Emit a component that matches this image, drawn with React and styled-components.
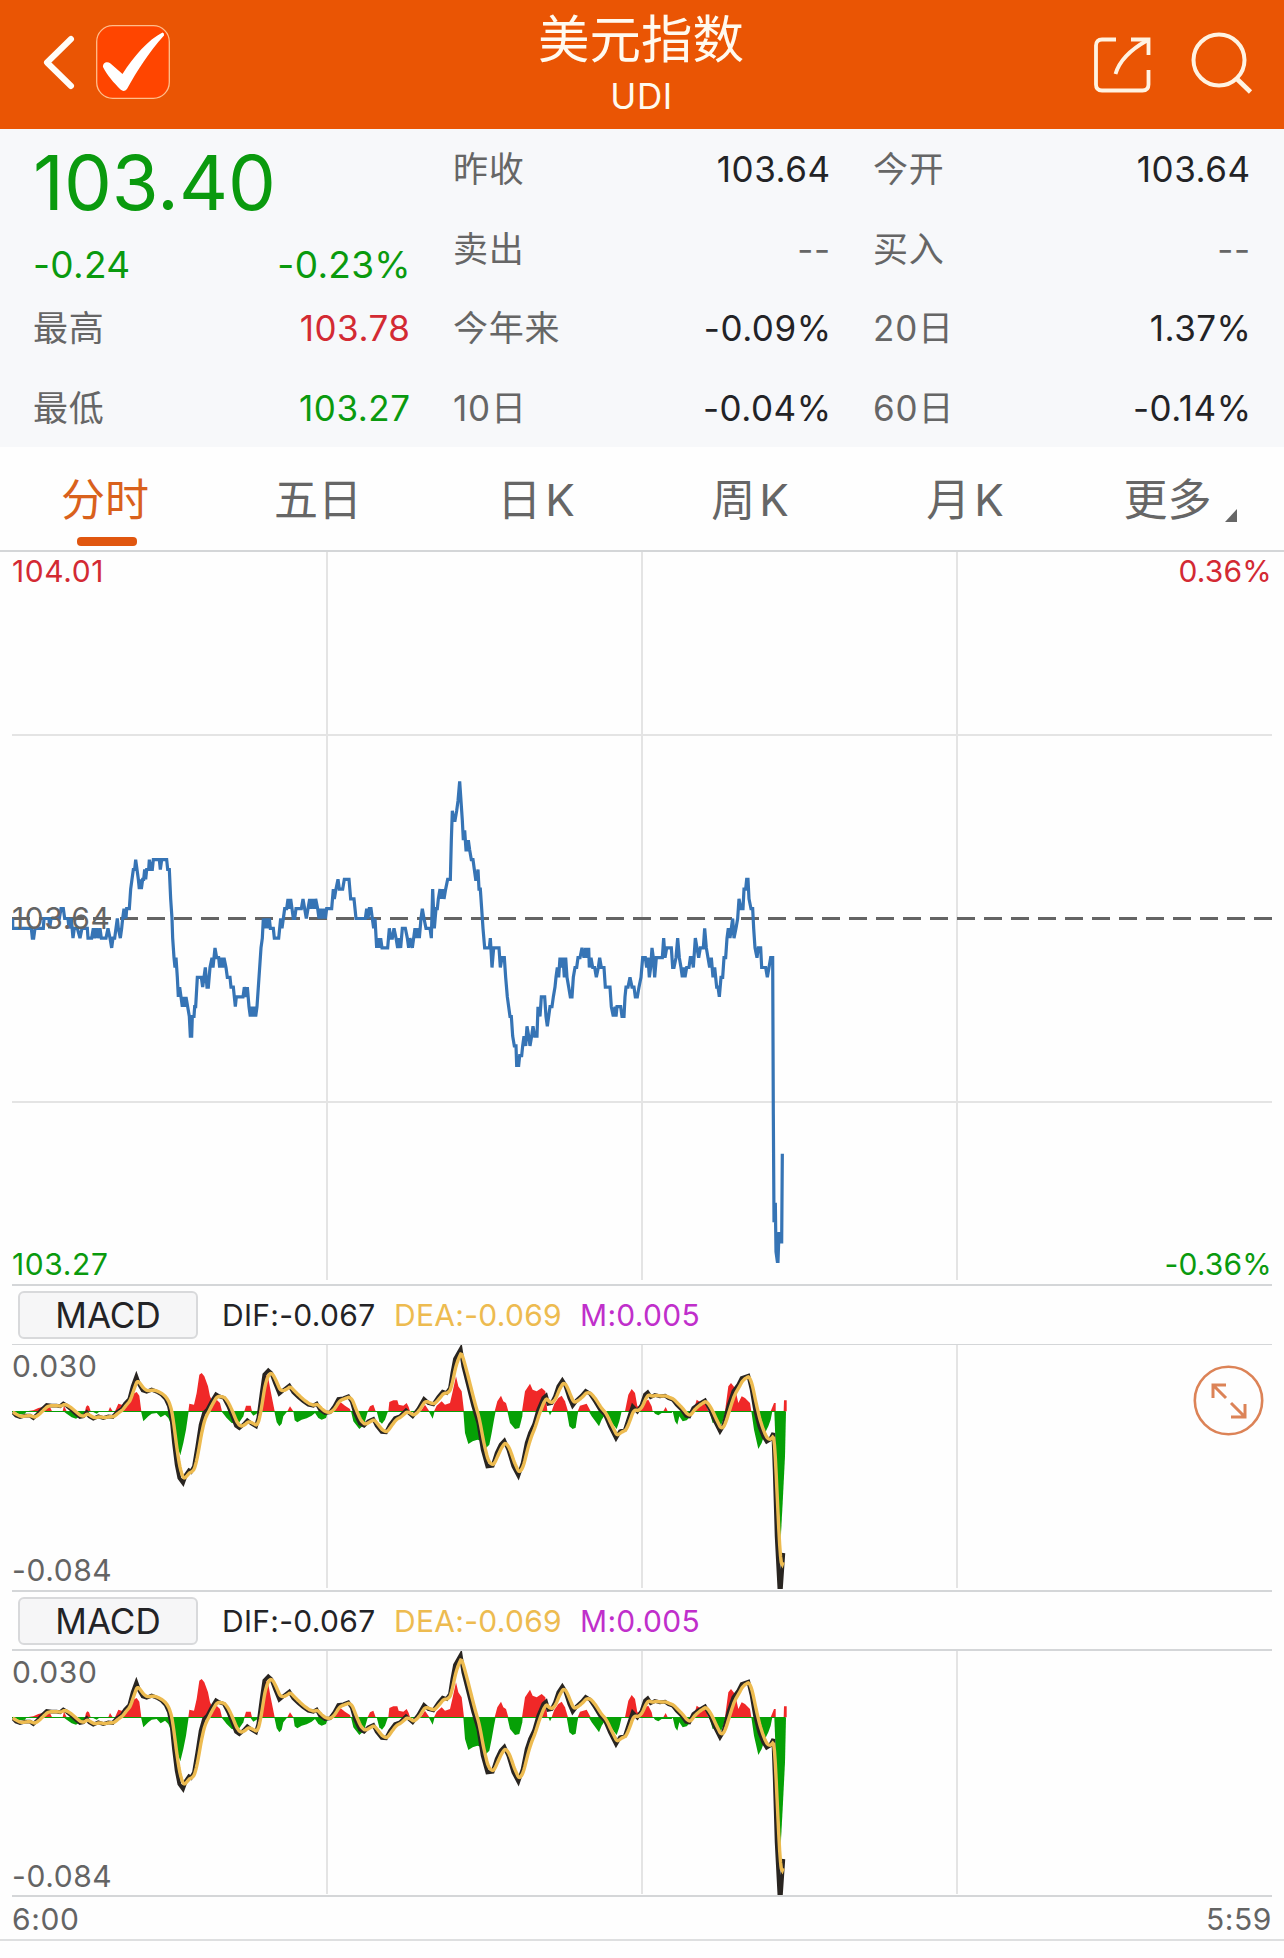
import React from "react";
import styled, { createGlobalStyle } from "styled-components";

const color = {
  brand: "#ea5504",
  up: "#d32a33",
  down: "#0a9a0e",
  text: "#232326",
  label: "#666666",
  axis: "#646464",
  grid: "#e4e4e4",
  rule: "#d4d6d8",
  price: "#3674b5",
  dea: "#edbb50",
  macd: "#c02fcb",
};

const GlobalStyle = createGlobalStyle`
  * { box-sizing: border-box; }
  body {
    margin: 0;
    background: #fefefe;
    font-family: Inter, "Noto Sans CJK SC", sans-serif;
    color: ${color.text};
  }
`;

const Page = styled.div`
  width: 1284px;
  height: 1958px;
  overflow: hidden;
  display: flex;
  flex-direction: column;
`;

/* ---------- header ---------- */

const Header = styled.header`
  height: 129px;
  flex: none;
  display: grid;
  grid-template-columns: 1fr auto 1fr;
  background: ${color.brand};
  color: #fffaf0;
`;

const HeaderSide = styled.div`
  display: flex;
  justify-content: ${(p) => (p.$end ? "flex-end" : "flex-start")};
  gap: ${(p) => p.$gap}px;
  padding: ${(p) => p.$pad};
`;

const Titles = styled.div`
  display: flex;
  flex-direction: column;
  align-items: center;
  padding-top: 10px;
`;

const Title = styled.h1`
  margin: 0;
  padding-right: 2px;
  font-size: 51.5px;
  line-height: 58px;
  font-weight: 400;
`;

const Symbol = styled.div`
  font-size: 35px;
  line-height: 40px;
  margin-top: 8px;
  padding-right: 1px;
  letter-spacing: 0.6px;
`;

/* ---------- quote ---------- */

const Quote = styled.section`
  height: 318px;
  flex: none;
  display: grid;
  grid-template-columns: repeat(3, 376px);
  column-gap: 44px;
  padding-left: 34px;
  background: #f7f8fa;
`;

const QuoteColumn = styled.div`
  display: flex;
  flex-direction: column;
`;

const LastPrice = styled.div`
  height: 94px;
  padding-top: 13px;
  line-height: 80px;
  font-size: 76px;
  text-indent: -1px;
  color: ${color.down};
`;

const Change = styled.div`
  height: 65px;
  padding-top: 19px;
  display: flex;
  justify-content: space-between;
  font-size: 37px;
  line-height: 46px;
  letter-spacing: 0.3px;
  margin: 0 -1px;
  color: ${color.down};
`;

const Stat = styled.div`
  height: 79.5px;
  padding-top: 1px;
  display: flex;
  align-items: center;
  justify-content: space-between;
  font-size: 35px;
  line-height: 40px;
`;

const StatLabel = styled.span`
  color: ${color.label};
  letter-spacing: 0.8px;
  margin-left: -1px;
`;

const StatValue = styled.span`
  color: ${(p) => p.$color || color.text};
  letter-spacing: 0.5px;
  margin-right: ${(p) => (p.$percent ? -1.5 : -0.5)}px;
`;

/* ---------- tabs ---------- */

const Tabs = styled.nav`
  height: 105px;
  flex: none;
  display: grid;
  grid-template-columns: 210px 216px 220px 208px 222px 208px;
  border-bottom: 2px solid ${color.rule};
`;

const Tab = styled.div`
  position: relative;
  display: flex;
  justify-content: center;
  gap: ${(p) => p.$gap || 0}px;
  padding-top: 27px;
  font-size: 44px;
  line-height: 52px;
  color: ${(p) => (p.$active ? "#d9611c" : color.label)};
  &::after {
    content: "";
    display: ${(p) => (p.$active ? "block" : "none")};
    position: absolute;
    left: 77px;
    top: 90px;
    width: 60px;
    height: 9px;
    border-radius: 4px;
    background: #e0560f;
  }
`;

const Corner = styled.svg`
  align-self: flex-end;
  margin-bottom: 28px;
`;

/* ---------- charts ---------- */

const ChartBox = styled.div`
  position: relative;
  flex: none;
  height: ${(p) => p.$height}px;
  margin: 0 12px;
  border-bottom: 2px solid ${color.rule};
`;

const Plot = styled.svg`
  display: block;
  width: 1260px;
  height: 100%;
  overflow: hidden;
`;

const AxisLabel = styled.span`
  position: absolute;
  ${(p) => (p.$right ? "right: 0;" : "left: 0;")}
  top: ${(p) => p.$top}px;
  font-size: 30px;
  line-height: 36px;
  letter-spacing: ${(p) => (p.$right ? 0.2 : 0.6)}px;
  color: ${(p) => p.$color || color.axis};
`;

const IndicatorBar = styled.div`
  height: 59px;
  flex: none;
  margin: 0 12px;
  padding-left: 6px;
  display: flex;
  align-items: center;
  border-bottom: ${(p) => (p.$thin ? 1 : 2)}px solid ${color.rule};
  font-size: 30px;
`;

const IndicatorButton = styled.button`
  width: 180px;
  height: 48px;
  margin: 0 24px 0 0;
  padding: 0;
  border: 2px solid #d8d9db;
  border-radius: 6px;
  background: #f6f6f7;
  color: ${color.text};
  font: 400 35px/44px Inter, sans-serif;
`;

const Reading = styled.span`
  color: ${(p) => p.$color};
  width: ${(p) => p.$width}px;
  white-space: nowrap;
  letter-spacing: 0.3px;
`;

const ExpandButton = styled.button`
  position: absolute;
  right: 8px;
  top: 20px;
  width: 71px;
  height: 71px;
  padding: 0;
  border: 0;
  background: none;
`;

const TimeAxis = styled.div`
  height: 44px;
  flex: none;
  display: flex;
  justify-content: space-between;
  align-items: center;
  padding: 1px 12px 0;
  border-bottom: 2px solid #dedfe0;
  font-size: 30px;
  letter-spacing: 0.6px;
  color: ${color.axis};
`;

/* ---------- data: x in thirds of a pixel, price in cents from the previous close ---------- */

const parse = (s) =>
  s.trim().split(/\s*,\s*/).map((p) => p.trim().split(/\s+/).map(Number));
const shift = (pts, dx) => pts.map(([x, y]) => [x + dx, y]);

const price = [
  ...parse(`38 0,38 -1,94 -1,97 -2,101 -2,105 -1,130 -1,132 0,147 0,149 -1,153 0,158 0,178 0,183 1,190 1,194 0,204 0,207 -1,214 0,219 -2,223 -1,232 -1,240 -2,246 -1,262 -1,264 -2,275 -2,280 -1,284 -2,290 -1,294 -2,300 -1,304 -2,318 -2,324 -1,330 -2,335 -3,339 -2,344 -2,348 -1,352 0,355 -1,361 -2,365 -1,368 0,372 1,378 0,380 1,388 1,392 3,396 4,400 5,404 5,407 6,411 5,415 4,418 3,421 4,424 3,428 4,431 4,434 5,437 4,440 5,446 5,448 6,453 5,457 5,460 6,478 6,481 5,485 6,500 6,503 5,508 5,512 2,516 0,518 -2,522 -4,525 -5,528 -4,532 -6,535 -8,539 -7,543 -8,547 -9,551 -8,555 -9,558 -8,563 -9,568 -10,571 -12,575 -12,577 -10,582 -10,584 -9,587 -9,592 -6,604 -6,608 -7,612 -6,616 -5,621 -7,625 -7,630 -5,636 -4,639 -5,642 -4,645 -3,650 -4,656 -4,659 -5,664 -4,668 -5,672 -4,678 -5,682 -6,690 -6,693 -7,700 -7,703 -8,706 -9,709 -8,729 -8,733 -7,738 -8,742 -7,747 -9,751 -10,755 -9,760 -10,764 -9,767 -10,771 -9,775 -7,779 -5,783 -3,787 -2,790 0,794 -1,800 0,804 -1,808 0,811 -1,820 -1,823 -2,836 -2,842 0,846 -1,850 0,854 1,860 1,864 2,868 1,872 2,876 1,880 0,884 0,888 1,904 1,909 2,914 1,919 0,924 1,929 2,933 1,938 2,943 1,947 2,953 1,957 0,962 1,967 0,972 1,976 0,980 1,995 1,1000 3,1003 2,1008 3,1014 4,1018 3,1028 3,1033 4,1047 4,1052 2,1062 2,1068 0,1096 0,1100 1,1104 0,1108 1,1113 1,1117 0,1121 -1,1125 0,1130 -3,1134 -2,1138 -3,1142 -2,1146 -3,1163 -3,1168 -1,1172 -2,1177 -2,1182 -1`),
  ...shift(
    parse(`48 -2,53 -3,57 -2,62 -3,67 -1,76 -1,82 -2,86 -3,90 -2,97 -3,101 -2,105 -1,110 -2,115 -1,118 -2,123 0,127 1,132 0,138 -1,150 -1,154 -2,158 3,163 -1,168 1,172 1,175 2,180 3,184 2,188 3,192 2,197 3,203 4,211 4,214 8,217 11,221 10,225 10,230 11,234 12,239 14,243 12,247 10,250 8,254 9,258 7,262 7,265 8,269 7,274 6,279 6,283 5,287 4,291 4,294 5,297 3,301 3,305 1,309 -1,314 -3,328 -3,331 -2,336 -5,341 -3,357 -3,361 -5,366 -4,373 -4,377 -6,382 -8,386 -9,390 -10,394 -10,398 -12,403 -13,408 -13,410 -15,416 -15,419 -14,425 -14,428 -13,432 -12,437 -13,441 -11,446 -12,450 -13,455 -12,459 -11,464 -12,471 -12,474 -9,480 -10,484 -8,489 -8,494 -8,498 -10,502 -11,506 -10,510 -9,516 -9,520 -8,525 -7,528 -6,532 -5,536 -6,540 -4,545 -5,549 -4,553 -6,557 -4,561 -6,566 -7,571 -8,576 -8,580 -6,585 -5,590 -5,594 -4,600 -4,606 -3,612 -4,617 -3,622 -4,626 -3,628 -5,633 -4,638 -5,644 -5,649 -6,655 -5,659 -4,664 -5,672 -5,676 -7,690 -7,694 -9,700 -10,705 -9,708 -10,711 -9,722 -9,726 -10,732 -10,735 -8,738 -7,744 -7,750 -6,756 -7,762 -7,766 -8,772 -8,777 -7,783 -6,788 -4,796 -4,800 -5,804 -4,808 -6,812 -5,816 -3,820 -4,824 -6,829 -4,847 -4,851 -2,855 -4,860 -3,874 -3,878 -5,882 -5,888 -4,893 -2,898 -4,903 -5,907 -6,911 -5,915 -6,920 -5,927 -5,931 -4,936 -4,940 -5,946 -2,951 -3,956 -4,961 -3,970 -3,974 -1,979 -3,984 -4,989 -5,994 -4,999 -6,1004 -5,1010 -7,1014 -7,1018 -8,1023 -6,1028 -6,1032 -4,1037 -4,1041 -2,1045 -1,1050 -2,1054 -1,1058 0,1062 -2,1068 -1,1073 0,1077 2,1083 1,1089 1,1092 3,1097 3,1100 4,1104 4,1107 2,1113 1,1118 1,1121 -1,1125 -3,1131 -4,1135 -3,1142 -3,1145 -5,1157 -5,1162 -6,1167 -5,1172 -4,1178 -4,1180 -20,1182 -31,1186 -29,1188 -34,1192 -35,1194 -35,1197 -32,1201 -33,1205 -33,1207 -24`),
    1140
  ),
];

/* MACD samples: x in thirds of a pixel, y is the same unit with the zero line at 425 */

const dif = [
  ...parse(`38 428,48 438,60 442,75 438,90 438,100 445,110 436,125 420,140 406,155 408,170 408,180 410,190 402,200 408,212 418,225 430,240 442,250 440,260 428,268 440,280 447,295 440,310 445,325 440,338 442,350 428,365 418,375 402,388 388,398 350,409 320,418 345,428 362,440 366,455 360,470 366,485 375,497 388,507 410,515 450,522 520,530 585,538 625,549 640,558 615,567 602,573 606,582 590,592 530,602 465,612 430,622 420,635 395,648 374,658 380,672 385,685 410,697 440,708 468,718 475,730 465,742 452,755 462,768 470,775 445,785 370,793 315,805 302,814 310,825 340,838 372,850 362,868 348,880 368,895 382,910 395,925 405,940 408,950 402,960 420,975 430,990 428,1003 410,1015 388,1030 386,1045 380,1055 395,1065 430,1080 462,1092 468,1105 455,1120 448,1130 468,1145 487,1158 488,1170 465,1185 445,1200 440`),
  ...shift(
    parse(`18 422,38 440,55 418,72 388,85 400,100 404,115 382,128 366,140 370,150 355,157 310,165 268,182 238,190 290,205 350,220 410,235 460,248 540,262 590,278 588,290 550,302 525,313 513,325 540,340 590,355 618,368 580,380 520,390 490,402 465,415 420,430 385,438 378,445 402,455 400,465 380,475 350,487 332,495 345,508 385,518 408,530 392,545 378,557 364,570 372,585 395,600 420,615 435,630 470,648 506,660 485,675 480,688 440,698 410,712 425,725 405,735 375,743 368,752 382,765 376,780 380,795 378,805 385,818 390,830 405,845 420,858 438,868 440,880 415,895 404,915 392,930 420,945 455,960 485,970 468,985 410,1000 365,1015 345,1025 325,1045 318,1055 360,1065 420,1078 470,1090 500,1100 516,1110 510,1120 490,1124 600,1130 800,1138 952,1143 952,1150 850`),
    1200
  ),
];

const upRuns = [
  ...`80 425,100 422,115 415,125 413,140 410,150 412,156 425|188 425,192 408,200 425|255 425,258 412,262 407,267 410,272 425|325 425,330 412,338 425|345 425,355 402,365 405,378 400,390 385,400 372,410 367,418 378,424 425|565 425,568 402,582 405,590 370,598 315,605 310,613 320,624 350,630 380,640 400,650 390,660 400,666 425|733 425,738 408,752 408,756 425|775 425,785 390,795 320,803 315,812 365,824 425|862 425,870 410,880 425|1003 425,1010 405,1022 398,1035 408,1050 418,1052 425|1103 425,1110 410,1120 405,1127 425|1165 425,1168 397,1180 392,1192 392,1196 405,1210 408,1220 400,1226 412,1230 425`
    .split("|")
    .map(parse),
  ...`62 425,75 405,88 425|102 425,110 408,125 395,135 405,150 400,157 370,168 320,175 350,185 365,192 425|284 425,292 395,303 378,310 395,318 400,325 425|366 425,375 365,390 342,398 360,410 365,425 355,436 365,442 425|455 425,463 402,475 385,485 378,495 395,504 425|533 425,540 408,560 402,572 425|675 425,685 375,695 358,705 370,712 410,725 412,735 395,745 390,755 410,758 425|790 425,797 412,803 425|880 425,890 390,905 400,915 392,925 425|975 425,985 350,993 340,1005 355,1015 400,1025 380,1035 385,1050 400,1054 425|1112 425,1122 400,1127 400,1127 425|1151 425,1152 392,1160 392,1160 425`
    .split("|")
    .map((s) => shift(parse(s), 1200)),
];

const downRuns = [
  ...`38 425,42 432,60 434,75 432,80 425|190 425,200 432,215 443,228 447,240 440,250 432,258 425|275 425,290 432,300 425|423 425,430 455,445 440,455 432,470 430,482 443,495 435,505 445,515 470,525 510,541 557,550 520,558 480,566 425|664 425,680 445,695 460,715 462,730 440,734 425|750 425,760 438,770 432,774 425|823 425,830 458,838 470,845 462,850 440,858 430,862 425|880 425,884 452,892 458,905 450,920 446,935 438,945 430,955 445,965 450,978 445,985 425|1053 425,1060 455,1078 478,1092 465,1102 430,1104 425|1130 425,1138 455,1146 462,1155 450,1164 425`
    .split("|")
    .map(parse),
  ...`86 425,98 447,104 425|190 425,195 490,205 523,218 515,232 510,248 515,258 535,268 525,275 490,282 450,287 425|322 425,330 460,345 478,358 475,367 440,368 425|445 425,450 437,456 425|500 425,508 470,518 478,527 474,532 440,535 425|566 425,575 440,590 460,597 470,605 450,612 440,625 445,640 465,650 478,658 455,665 425|760 425,765 432,775 437,785 430,815 430,818 425|818 425,825 455,832 465,838 440,848 455,860 452,872 440,880 425|928 425,938 460,950 455,962 470,970 450,977 425|1054 425,1062 480,1075 538,1085 520,1095 490,1105 470,1112 450,1117 425|1123 425,1128 560,1135 700,1142 810,1148 700,1155 560,1158 425`
    .split("|")
    .map((s) => shift(parse(s), 1200)),
];

/* signal line: exponential average of DIF sampled once a minute */
const smooth = (pts, step, alpha) => {
  const out = [];
  let i = 0;
  let value = pts[0][1];
  for (let x = pts[0][0]; x <= pts[pts.length - 1][0]; x += step) {
    while (i < pts.length - 2 && pts[i + 1][0] < x) i += 1;
    const [x0, y0] = pts[i];
    const [x1, y1] = pts[i + 1];
    const y = y0 + ((y1 - y0) * (x - x0)) / (x1 - x0);
    value += alpha * (y - value);
    out.push([x, value]);
  }
  return out;
};
const dea = smooth(dif, 2.6, 0.27);

const toPoints = (pts, mapY) =>
  pts.map(([x, y]) => `${(x / 3 - 12).toFixed(2)},${mapY(y).toFixed(2)}`).join(" ");

const priceY = (v) => 366.5 - v * 9.8;
const macdY = (v) => (v - 226) / 3;

const VerticalGrid = ({ height }) =>
  [315, 630, 945].map((x) => (
    <line key={x} x1={x} x2={x} y1="0" y2={height} stroke={color.grid} strokeWidth="2" />
  ));

function PriceChart() {
  return (
    <ChartBox $height={734}>
      <Plot>
        <VerticalGrid height={728} />
        <path d="M0 183H1260M0 550H1260" stroke={color.grid} strokeWidth="2" />
        <path d="M0 366.5H1260" stroke="#646464" strokeWidth="3" strokeDasharray="18 9" />
        <polyline
          points={toPoints(price, priceY)}
          fill="none"
          stroke={color.price}
          strokeWidth="3.2"
          strokeLinejoin="miter"
          strokeMiterlimit="2"
        />
      </Plot>
      <AxisLabel $top={1} $color={color.up}>104.01</AxisLabel>
      <AxisLabel $top={1} $right $color={color.up}>0.36%</AxisLabel>
      <AxisLabel $top={348}>103.64</AxisLabel>
      <AxisLabel $top={694} $color={color.down}>103.27</AxisLabel>
      <AxisLabel $top={694} $right $color={color.down}>-0.36%</AxisLabel>
    </ChartBox>
  );
}

function MacdPanel({ expandable, thin, height }) {
  return (
    <>
      <IndicatorBar $thin={thin}>
        <IndicatorButton>MACD</IndicatorButton>
        <Reading $width={172} $color={color.text}>DIF:-0.067</Reading>
        <Reading $width={186} $color={color.dea}>DEA:-0.069</Reading>
        <Reading $width={130} $color={color.macd}>M:0.005</Reading>
      </IndicatorBar>
      <ChartBox $height={height}>
        <Plot>
          <VerticalGrid height={243} />
          {downRuns.map((r, i) => (
            <polygon key={i} points={toPoints(r, macdY)} fill="#06a006" />
          ))}
          {upRuns.map((r, i) => (
            <polygon key={i} points={toPoints(r, macdY)} fill="#f02828" />
          ))}
          <path d="M0 66.5H773" stroke="#06a006" strokeWidth="1.2" />
          <polyline points={toPoints(dif, macdY)} fill="none" stroke="#292521" strokeWidth="3.8" />
          <polyline points={toPoints(dea, macdY)} fill="none" stroke={color.dea} strokeWidth="3.4" />
        </Plot>
        <AxisLabel $top={3}>0.030</AxisLabel>
        <AxisLabel $top={207}>-0.084</AxisLabel>
        {expandable && (
          <ExpandButton aria-label="expand">
            <svg width="71" height="71" fill="none" stroke="#dc8357" strokeWidth="2.6">
              <circle cx="35.5" cy="35.5" r="33.7" />
              <path d="M33 33 20 20M20 33V20H33M38 38 52 52M52 39V52H38" strokeWidth="3" />
            </svg>
          </ExpandButton>
        )}
      </ChartBox>
    </>
  );
}

const columns = [
  [["最高", "103.78", color.up], ["最低", "103.27", color.down]],
  [["昨收", "103.64"], ["卖出", "--", color.label], ["今年来", "-0.09%"], ["10日", "-0.04%"]],
  [["今开", "103.64"], ["买入", "--", color.label], ["20日", "1.37%"], ["60日", "-0.14%"]],
];

const Stats = ({ rows }) =>
  rows.map(([label, value, tint]) => (
    <Stat key={label}>
      <StatLabel>{label}</StatLabel>
      <StatValue $color={tint} $percent={value.endsWith("%")}>{value}</StatValue>
    </Stat>
  ));

export default function App() {
  return (
    <Page>
      <GlobalStyle />
      <Header>
        <HeaderSide $gap={20} $pad="25px 0 0 42px">
          <svg width="34" height="74" fill="none" stroke="#fffdf8" strokeWidth="6" strokeLinecap="round" strokeLinejoin="round">
            <path d="M29 14 5 37.5 29 61" />
          </svg>
          <svg width="74" height="74">
            <rect x=".7" y=".7" width="72.6" height="72.6" rx="16" fill="#ff4500" stroke="#ffbe8c" strokeWidth="1.3" />
            <path fill="#fff" d="M7 42C6.500 38 11 35.500 14.500 38.500L26.500 49C38 31 52 15 66.500 7.500Q68.500 8 68 10.500C53 27 41 46 31 64Q28 67.500 24.500 64.500C18 58 11 50 7 42Z" />
          </svg>
        </HeaderSide>
        <Titles>
          <Title>美元指数</Title>
          <Symbol>UDI</Symbol>
        </Titles>
        <HeaderSide $end $gap={39} $pad="31px 30px 0 0">
          <svg width="60" height="64" fill="none" stroke="#fff3e2" strokeWidth="3.8">
            <path d="M25 8.500H11Q5 8.500 5 14.500V53.500Q5 59.500 11 59.500H51.500Q57.500 59.500 57.500 53.500V39" />
            <path d="M40 8.500H57.500V24" />
            <path d="M24.500 43Q30 24 56 9.500" />
          </svg>
          <svg width="64" height="64" fill="none" stroke="#fff3e2" strokeWidth="4">
            <circle cx="29" cy="29" r="25.500" />
            <path d="M46.500 47.500 60.500 61" strokeWidth="4.600" />
          </svg>
        </HeaderSide>
      </Header>

      <Quote>
        <QuoteColumn>
          <LastPrice>103.40</LastPrice>
          <Change>
            <span>-0.24</span>
            <span>-0.23%</span>
          </Change>
          <Stats rows={columns[0]} />
        </QuoteColumn>
        <QuoteColumn><Stats rows={columns[1]} /></QuoteColumn>
        <QuoteColumn><Stats rows={columns[2]} /></QuoteColumn>
      </Quote>

      <Tabs>
        <Tab $active>分时</Tab>
        <Tab>五日</Tab>
        <Tab $gap={4}><span>日</span><span>K</span></Tab>
        <Tab $gap={4}><span>周</span><span>K</span></Tab>
        <Tab $gap={4}><span>月</span><span>K</span></Tab>
        <Tab $gap={13}>
          更多
          <Corner width="12" height="13"><path d="M12 0V13H0Z" fill="#666" /></Corner>
        </Tab>
      </Tabs>

      <PriceChart />
      <MacdPanel expandable thin height={247} />
      <MacdPanel height={246} />
      <TimeAxis>
        <span>6:00</span>
        <span>5:59</span>
      </TimeAxis>
    </Page>
  );
}
